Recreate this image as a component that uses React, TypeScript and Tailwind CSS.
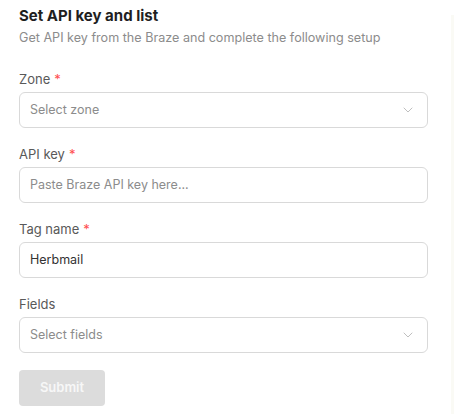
import React from "react";

function Chevron() {
  return (
    <svg width="10" height="10" viewBox="0 0 10 10" fill="none" className="shrink-0">
      <path d="M1 3L5 7L9 3" stroke="#bfbfbf" strokeWidth="1" strokeLinecap="round" strokeLinejoin="round" />
    </svg>
  );
}

function Label({ text, required }: { text: string; required?: boolean }) {
  return (
    <div className="text-[13px] leading-[20px] text-[#595959] mb-[3px]">
      {text}
      {required && <span className="text-[#ff4d4f] ml-[4px]">*</span>}
    </div>
  );
}

function Select({ placeholder }: { placeholder: string }) {
  return (
    <div className="h-[36px] w-full rounded-[6px] border border-[#d9d9d9] bg-white flex items-center justify-between pl-[10px] pr-[14px]">
      <span className="text-[12.5px] text-[#8c8c8c]">{placeholder}</span>
      <Chevron />
    </div>
  );
}

function Input({ placeholder, value }: { placeholder: string; value?: string }) {
  return (
    <div className="h-[36px] w-full rounded-[6px] border border-[#d9d9d9] bg-white flex items-center px-[10px]">
      {value ? (
        <span className="text-[12.5px] text-[#333333]">{value}</span>
      ) : (
        <span className="text-[12.5px] text-[#8c8c8c]">{placeholder}</span>
      )}
    </div>
  );
}

export default function App() {
  return (
    <div className="w-[454px] h-[414px] bg-white flex" style={{ fontFamily: "Inter, 'Noto Sans', sans-serif" }}>
      <div className="flex-1 pl-[19px] pr-[23px] pt-[6px]">
        <div className="text-[15px] leading-[20px] font-bold text-[#1f1f1f]">Set API key and list</div>
        <div className="text-[12.6px] leading-[20px] text-[#8c8c8c] mt-[1.5px]">
          Get API key from the Braze and complete the following setup
        </div>
        <div className="mt-[21.5px]">
          <Label text="Zone" required />
          <Select placeholder="Select zone" />
        </div>
        <div className="mt-[16px]">
          <Label text="API key" required />
          <Input placeholder="Paste Braze API key here..." />
        </div>
        <div className="mt-[16px]">
          <Label text="Tag name" required />
          <Input placeholder="" value="Herbmail" />
        </div>
        <div className="mt-[16px]">
          <Label text="Fields" />
          <Select placeholder="Select fields" />
        </div>
        <button className="mt-[17px] h-[36px] w-[86px] rounded-[4px] bg-[#dcdcdc] text-[13px] font-semibold text-[#f7f7f7]">
          Submit
        </button>
      </div>
      <div className="w-[3px] mt-[15px] bg-[#fafaf5]" />
    </div>
  );
}
